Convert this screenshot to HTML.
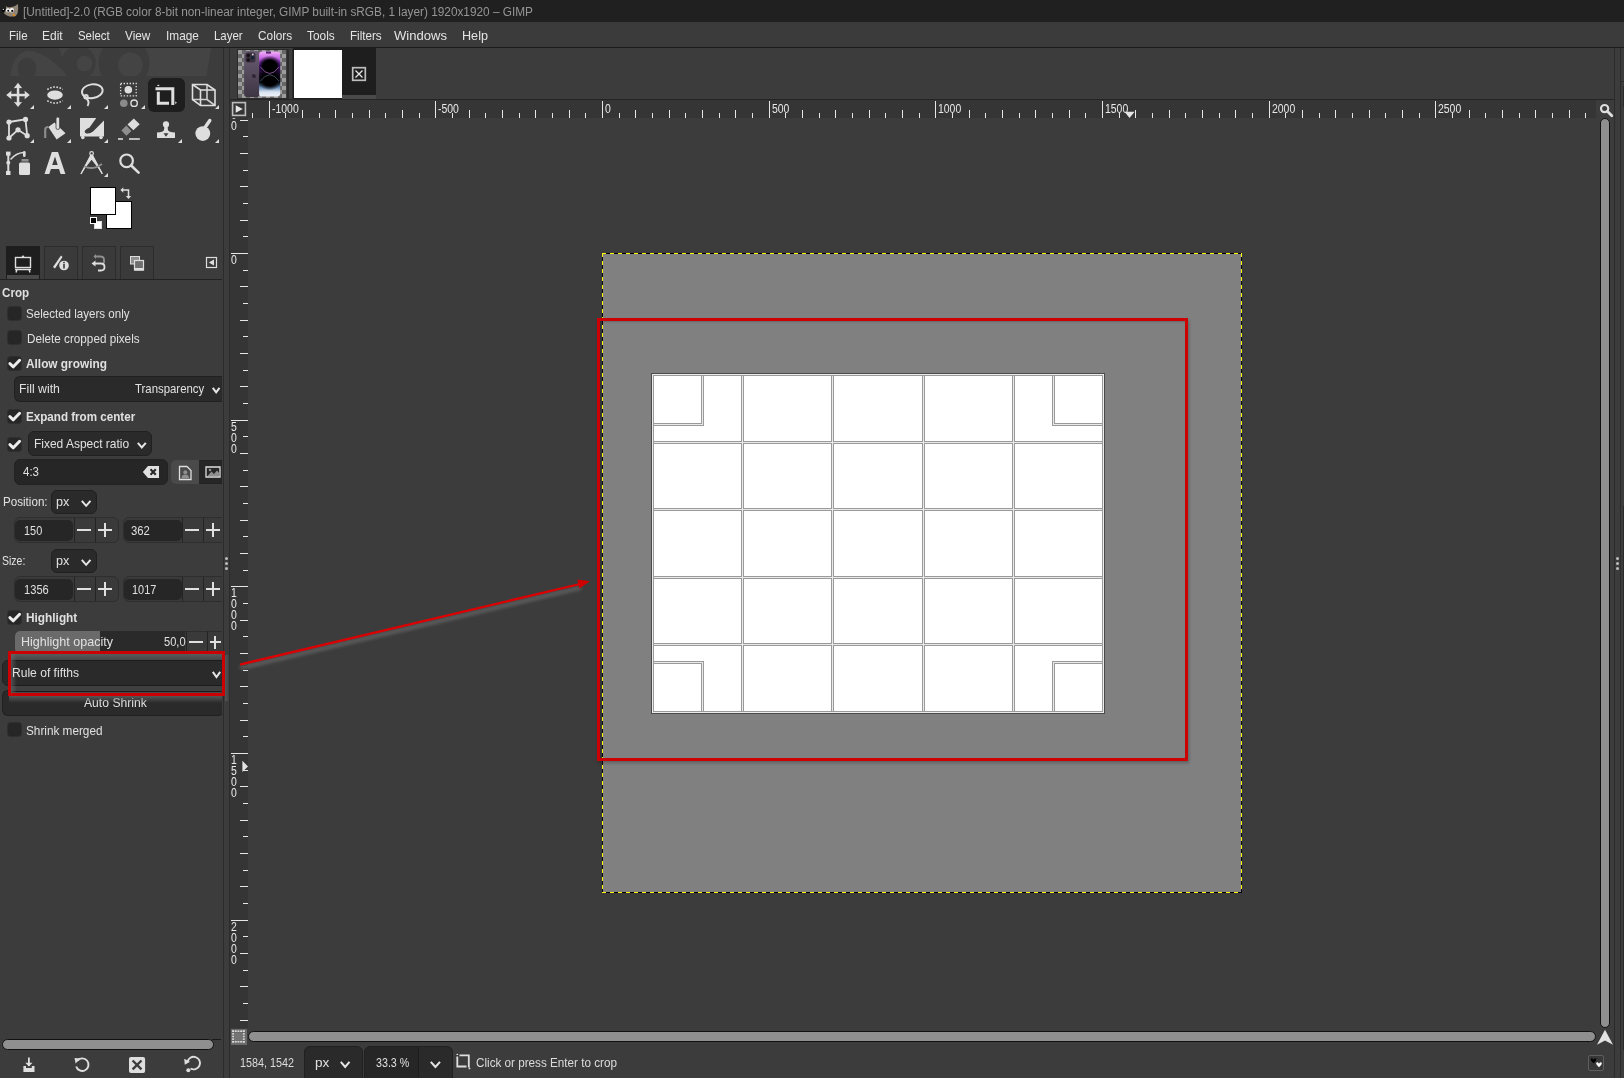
<!DOCTYPE html>
<html><head><meta charset="utf-8"><title>GIMP</title>
<style>
html,body{margin:0;padding:0;}
body{width:1624px;height:1078px;overflow:hidden;position:relative;background:#3c3c3c;font-family:"Liberation Sans", sans-serif;}
.r{position:absolute;}
.t{position:absolute;white-space:pre;transform-origin:0 50%;}
svg.r{overflow:visible;}
</style></head><body>
<div class="r" style="left:0px;top:0px;width:1624px;height:22px;background:#202020;"></div>
<svg class="r" style="left:0px;top:0px;" width="22" height="22" viewBox="0 0 22 22">
<path d="M4 13.2 Q4.2 11 5.8 10.2 L6.2 6 Q7.6 7.6 9.6 7.3 Q13 7 15 6 L18 4 Q18.6 9 17.6 13 Q16.6 16.8 12 16.6 Q7 16.6 4 13.2 Z" fill="#8f8577"/>
<ellipse cx="8" cy="10.3" rx="2.1" ry="2.1" fill="#fff"/><ellipse cx="11.9" cy="10.3" rx="2.1" ry="2.3" fill="#fff"/>
<circle cx="8.2" cy="10.7" r="1" fill="#000"/><circle cx="12.3" cy="10.9" r="1.15" fill="#000"/>
<circle cx="3.4" cy="10.2" r="1.6" fill="#000"/><circle cx="3.3" cy="9.4" r="0.65" fill="#fff"/>
<path d="M12.8 14.1 L15 15.8" stroke="#e08a20" stroke-width="1.7"/>
</svg>
<span id="t1" class="t" style="left:23.0px;top:5.62px;font-size:12.5px;line-height:12.5px;color:#959595;font-weight:normal;transform:scaleX(0.9451);">[Untitled]-2.0 (RGB color 8-bit non-linear integer, GIMP built-in sRGB, 1 layer) 1920x1920 – GIMP</span>
<div class="r" style="left:0px;top:22px;width:1624px;height:25px;background:#3b3b3b;"></div>
<div class="r" style="left:0px;top:47px;width:1624px;height:1px;background:#1c1c1c;"></div>
<span id="t2" class="t" style="left:8.6px;top:28.90px;font-size:13px;line-height:13px;color:#e4e4e4;font-weight:normal;transform:scaleX(0.8871);">File</span>
<span id="t3" class="t" style="left:42.4px;top:28.90px;font-size:13px;line-height:13px;color:#e4e4e4;font-weight:normal;transform:scaleX(0.9203);">Edit</span>
<span id="t4" class="t" style="left:78.3px;top:28.90px;font-size:13px;line-height:13px;color:#e4e4e4;font-weight:normal;transform:scaleX(0.8765);">Select</span>
<span id="t5" class="t" style="left:125px;top:28.90px;font-size:13px;line-height:13px;color:#e4e4e4;font-weight:normal;transform:scaleX(0.9053);">View</span>
<span id="t6" class="t" style="left:166.3px;top:28.90px;font-size:13px;line-height:13px;color:#e4e4e4;font-weight:normal;transform:scaleX(0.9106);">Image</span>
<span id="t7" class="t" style="left:214.3px;top:28.90px;font-size:13px;line-height:13px;color:#e4e4e4;font-weight:normal;transform:scaleX(0.8817);">Layer</span>
<span id="t8" class="t" style="left:257.9px;top:28.90px;font-size:13px;line-height:13px;color:#e4e4e4;font-weight:normal;transform:scaleX(0.9104);">Colors</span>
<span id="t9" class="t" style="left:307.4px;top:28.90px;font-size:13px;line-height:13px;color:#e4e4e4;font-weight:normal;transform:scaleX(0.9128);">Tools</span>
<span id="t10" class="t" style="left:350.2px;top:28.90px;font-size:13px;line-height:13px;color:#e4e4e4;font-weight:normal;transform:scaleX(0.8956);">Filters</span>
<span id="t11" class="t" style="left:394px;top:28.90px;font-size:13px;line-height:13px;color:#e4e4e4;font-weight:normal;transform:scaleX(1.0048);">Windows</span>
<span id="t12" class="t" style="left:462px;top:28.90px;font-size:13px;line-height:13px;color:#e4e4e4;font-weight:normal;transform:scaleX(0.9709);">Help</span>
<svg class="r" style="left:0px;top:48px;overflow:hidden" width="224" height="28" viewBox="0 0 224 28">
<g transform="translate(0,-48)">
<path d="M11 76 C11 58 22 50 30 51 C40 52 50 58 60 68 L69 76 Z" fill="#444"/>
<ellipse cx="27" cy="68.5" rx="9.3" ry="10.8" fill="#3c3c3c"/>
<path d="M59 48 H211 L206.5 76 H69 Z" fill="#444"/>
<circle cx="78.6" cy="63" r="17.2" fill="#3c3c3c"/>
<circle cx="84.5" cy="63.6" r="7.9" fill="#444"/>
<circle cx="124" cy="63" r="25.5" fill="#3c3c3c"/>
<circle cx="130.4" cy="65" r="12.4" fill="#444"/>
</g></svg>
<svg class="r" style="left:0px;top:0px;position:absolute" width="224" height="240" viewBox="0 0 224 240">
<rect x="148" y="78" width="37" height="34" rx="6" fill="#1e1e1e"/>
<!-- move -->
<g fill="#dedede">
<rect x="16.8" y="86" width="2.5" height="18"/><rect x="9" y="93.8" width="18" height="2.5"/>
<path d="M18 82.8 L13.8 88.3 Q18 87.3 22.2 88.3Z M18 107 L13.8 101.7 Q18 102.7 22.2 101.7Z M6.2 95 L11.5 90.8 Q10.5 95 11.5 99.2Z M29.8 95 L24.5 90.8 Q25.5 95 24.5 99.2Z"/>
</g>
<path d="M34 105 V109 H30 Z" fill="#dedede"/>
<!-- ellipse select -->
<ellipse cx="55" cy="95.1" rx="7.8" ry="4.6" fill="#dedede"/>
<path d="M47.3 89.5 Q55 84.5 62.7 89.5" stroke="#dedede" stroke-width="1.6" fill="none" stroke-dasharray="1.6 1.6"/>
<path d="M47.3 100.6 Q55 105.6 62.7 100.6" stroke="#dedede" stroke-width="1.6" fill="none" stroke-dasharray="1.6 1.6"/>
<path d="M71 105 V109 H67 Z" fill="#dedede"/>
<!-- lasso -->
<ellipse cx="92.3" cy="91.2" rx="10.4" ry="6.9" stroke="#dedede" stroke-width="1.9" fill="none" transform="rotate(-8 92.3 91.2)"/>
<circle cx="86" cy="96.8" r="1.9" stroke="#dedede" stroke-width="1.6" fill="none"/>
<path d="M86.5 98.5 Q90 102 87.5 106" stroke="#dedede" stroke-width="1.9" fill="none"/>
<path d="M108 105 V109 H104 Z" fill="#dedede"/>
<!-- fuzzy select -->
<rect x="120.6" y="83.5" width="15.6" height="12.3" stroke="#dedede" stroke-width="1.3" fill="none" stroke-dasharray="1.4 1.6"/>
<circle cx="128.3" cy="89.8" r="3.8" fill="#dedede"/>
<circle cx="123.8" cy="103.2" r="3.8" fill="#8a8a8a"/>
<circle cx="134.1" cy="103.2" r="3.2" stroke="#dedede" stroke-width="1.4" fill="none"/>
<path d="M145 105 V109 H141 Z" fill="#dedede"/>
<!-- crop -->
<path d="M155.5 88.8 H172.8 V105" stroke="#dedede" stroke-width="3" fill="none"/>
<path d="M158.3 91.8 V103.2 H169" stroke="#dedede" stroke-width="3" fill="none"/>
<path d="M156.8 86 L158.3 84.5 L159.8 86Z" fill="#dedede"/>
<path d="M175.3 101.2 L176.8 102.7 L175.3 104.2Z" fill="#dedede"/>
<!-- 3d -->
<g stroke="#dedede" stroke-width="1.6" fill="none">
<path d="M192.5 84.5 H207 L215 90 V105.5 H200.5 L192.5 99.5 Z"/>
<path d="M192.5 84.5 L200.5 90 H215 M200.5 90 V105.5"/>
<path d="M207 84.5 V99.5 H192.5 M207 99.5 L215 105.5" opacity="0.9"/>
</g>
<path d="M219 105 V109 H215 Z" fill="#dedede"/>
<!-- unified transform -->
<g stroke="#dedede" stroke-width="1.8" fill="none">
<path d="M9 122 L25.5 119.4 L27.2 135.7 L18 129.8 L9 138 Z"/>
</g>
<g fill="#dedede">
<circle cx="9" cy="122" r="2.6"/><circle cx="25.5" cy="119.4" r="2.6"/><circle cx="27.2" cy="135.7" r="2.6"/>
<circle cx="18" cy="129.8" r="2.6"/><circle cx="9" cy="138" r="2.6"/>
</g>
<path d="M34 139 V143 H30 Z" fill="#dedede"/>
<!-- bucket -->
<path d="M48.3 127 L54.5 122.6 L65.5 133.2 L56.6 139.6 Z" fill="#dedede"/>
<rect x="56" y="117" width="3.6" height="12.5" rx="1.8" fill="#dedede" stroke="#3c3c3c" stroke-width="0.8"/>
<path d="M45.2 138 V129.5 Q45.2 127 48.3 127" stroke="#8a8a8a" stroke-width="2.2" fill="none"/>
<path d="M71 139 V143 H67 Z" fill="#dedede"/>
<!-- paintbrush canvas -->
<rect x="80" y="118" width="24" height="18.5" fill="#dedede"/>
<circle cx="82.8" cy="137.5" r="1.8" fill="#dedede"/><circle cx="101" cy="137.5" r="1.8" fill="#dedede"/>
<path d="M97 117 L104 117 L104 120.5 L93 131.5 Q90 134 86.5 133.5 Q84 132.5 85 130.5 Q87 128.5 89.5 127.5 Z" fill="#3c3c3c"/>
<path d="M108 139 V143 H104 Z" fill="#dedede"/>
<!-- eraser -->
<path d="M127.5 124.5 L133.8 118.4 L139.7 124.2 L133.4 130.2 Z" fill="#dedede"/>
<path d="M121.4 130.4 L126.4 125.6 L131.4 131 L126.4 135.8 Z" fill="#8f8f8f"/>
<rect x="118" y="138.2" width="5" height="1.6" fill="#dedede"/><rect x="129" y="138.2" width="10.8" height="1.6" fill="#dedede"/>
<!-- clone -->
<circle cx="166" cy="124.4" r="3.1" fill="#dedede"/>
<path d="M164.6 126 H167.4 L168 130 Q168.5 132 175 132.5 V138 H157 V132.5 Q163.5 132 164 130 Z" fill="#dedede"/>
<path d="M163.5 133.2 H168.5 L166 136.8 Z" fill="#3c3c3c"/>
<path d="M182 139 V143 H178 Z" fill="#dedede"/>
<!-- smudge -->
<circle cx="202.8" cy="133.6" r="7.4" fill="#dedede"/>
<path d="M205 127.5 L209.8 120.5" stroke="#dedede" stroke-width="3.4" stroke-linecap="round"/>
<path d="M219 139 V143 H215 Z" fill="#dedede"/>
<!-- paths -->
<rect x="6" y="151.6" width="4.5" height="4" fill="#dedede"/><rect x="6" y="171" width="4.5" height="4" fill="#dedede"/>
<rect x="7.3" y="154" width="2" height="18" fill="#dedede"/><circle cx="8.3" cy="162.8" r="2" fill="#dedede"/>
<path d="M10.5 159.5 Q16 153 23.5 152.5" stroke="#dedede" stroke-width="1.3" fill="none"/>
<rect x="23" y="151" width="2.6" height="6" rx="1.3" fill="#dedede"/>
<rect x="21.5" y="159" width="7" height="2.6" fill="#8f8f8f"/>
<rect x="19" y="162.5" width="11" height="12.5" rx="1.5" fill="#dedede"/>
<!-- text A -->
<path d="M44.5 174 L51.8 152 H58 L65.4 174 H60.6 L59 169 H50.9 L49.3 174 Z M52.2 165 H57.7 L55 156.4 Z" fill="#dedede"/>
<!-- measure -->
<circle cx="91.6" cy="153.4" r="1.8" stroke="#dedede" stroke-width="1.2" fill="none"/>
<path d="M90.3 154.8 L80.2 174.6 L91.6 159.8 L103 174.3 L92.9 154.8 Z" fill="#dedede"/><path d="M91.6 155 L81 174 M91.6 155 L102.3 173.8" stroke="#dedede" stroke-width="1.4"/>
<path d="M84 166 Q92 171 102 164" stroke="#8f8f8f" stroke-width="2" fill="none"/>
<path d="M108 173 V177 H104 Z" fill="#dedede"/>
<!-- zoom -->
<circle cx="126.6" cy="160.8" r="6.3" stroke="#dedede" stroke-width="2.2" fill="none"/>
<path d="M131.2 165.5 L138.6 172.6" stroke="#dedede" stroke-width="2.6" stroke-linecap="round"/>
<!-- colors -->
<rect x="106.5" y="201.5" width="25" height="27" fill="#fff" stroke="#000" stroke-width="1"/>
<rect x="90.5" y="187.5" width="25" height="27" fill="#fff" stroke="#000" stroke-width="1"/>
<rect x="94.5" y="221.5" width="7" height="7" fill="#fff" stroke="#ddd" stroke-width="1"/>
<rect x="90.5" y="217.5" width="6" height="6" fill="#000" stroke="#fff" stroke-width="1"/>
<path d="M122 190 H128.5 V196" stroke="#dedede" stroke-width="1.5" fill="none"/>
<path d="M120.4 190 L123.3 187.3 V192.7Z M128.5 199 L125.8 196 H131.2Z" fill="#dedede"/>
</svg>
<div class="r" style="left:0px;top:279px;width:223px;height:1px;background:#222;"></div>
<div class="r" style="left:6px;top:246px;width:34px;height:33px;background:#1e1e1e;"></div>
<div class="r" style="left:7px;top:275px;width:32px;height:4px;background:#4a4a4a;"></div>
<div class="r" style="left:44px;top:246px;width:34px;height:33px;box-sizing:border-box;border:1px solid #2c2c2c;border-bottom:none;background:#3a3a3a"></div>
<div class="r" style="left:82px;top:246px;width:34px;height:33px;box-sizing:border-box;border:1px solid #2c2c2c;border-bottom:none;background:#3a3a3a"></div>
<div class="r" style="left:120px;top:246px;width:34px;height:33px;box-sizing:border-box;border:1px solid #2c2c2c;border-bottom:none;background:#3a3a3a"></div>
<svg class="r" style="left:0px;top:0px;position:absolute" width="224" height="280" viewBox="0 0 224 280">
<g stroke="#dedede" stroke-width="1.4" fill="none">
<rect x="15.5" y="257.5" width="15" height="10"/>
<path d="M15 269.5 H31 M17 269.5 L16 272.5 M29 269.5 L30 272.5"/>
</g>
<path d="M21.5 257 L23 255 L24.5 257Z" fill="#dedede"/>
<path d="M53 267 L61 255.5 L62.5 257 L55 268.5 Z" fill="#dedede"/>
<circle cx="64" cy="265.5" r="4.8" fill="#dedede"/>
<rect x="63.2" y="264" width="1.6" height="4.5" fill="#3a3a3a"/><rect x="63.2" y="261.8" width="1.6" height="1.5" fill="#3a3a3a"/>
<path d="M104 263 V259.8 Q104 256.5 100 256.5 H96" stroke="#8f8f8f" stroke-width="1.8" fill="none"/>
<path d="M96 254 L93.5 256.5 L96 259Z" fill="#8f8f8f"/>
<path d="M98 270.5 H101 Q104.5 270.5 104.5 267 Q104.5 263.5 101 263.5 H95" stroke="#dedede" stroke-width="1.8" fill="none"/>
<path d="M95.5 260.5 L91.5 263.5 L95.5 266.5Z" fill="#dedede"/>
<rect x="130.5" y="256.5" width="9" height="7.5" fill="#8f8f8f" stroke="#dedede" stroke-width="1"/>
<rect x="134.5" y="260.5" width="9" height="9.5" fill="#6f6f6f" stroke="#dedede" stroke-width="1.2"/>
<rect x="134.5" y="268" width="9" height="2.5" fill="#dedede"/>
<rect x="206.5" y="257.5" width="10" height="10" stroke="#dedede" stroke-width="1.2" fill="none"/>
<path d="M214 259.5 L208.8 262.5 L214 265.5Z" fill="#dedede"/>
</svg>
<span id="t13" class="t" style="left:2.1px;top:285.90px;font-size:13px;line-height:13px;color:#e0e0e0;font-weight:bold;transform:scaleX(0.8929);">Crop</span>
<div class="r" style="left:6.5px;top:305.5px;width:15px;height:15px;box-sizing:border-box;background:#262626;border:1px solid #2f2f2f;border-radius:3.5px"></div>
<span id="t14" class="t" style="left:26.3px;top:306.90px;font-size:13px;line-height:13px;color:#e0e0e0;font-weight:normal;transform:scaleX(0.8895);">Selected layers only</span>
<div class="r" style="left:6.5px;top:330.3px;width:15px;height:15px;box-sizing:border-box;background:#262626;border:1px solid #2f2f2f;border-radius:3.5px"></div>
<span id="t15" class="t" style="left:26.6px;top:331.70px;font-size:13px;line-height:13px;color:#e0e0e0;font-weight:normal;transform:scaleX(0.9006);">Delete cropped pixels</span>
<div class="r" style="left:6.5px;top:355.5px;width:15px;height:15px;box-sizing:border-box;background:#262626;border:1px solid #2f2f2f;border-radius:3.5px"></div><svg class="r" style="left:6.5px;top:355.5px;" width="15" height="15" viewBox="0 0 15 15"><path d="M2.9 7.6 L6.3 10.8 L12.6 4.3" stroke="#ececec" stroke-width="3" fill="none" stroke-linejoin="round" stroke-linecap="round"/></svg>
<span id="t16" class="t" style="left:26.2px;top:356.90px;font-size:13px;line-height:13px;color:#e0e0e0;font-weight:bold;transform:scaleX(0.9109);">Allow growing</span>
<div class="r" style="left:14.2px;top:376.2px;width:220px;height:25.5px;box-sizing:border-box;background:#2a2a2a;border:1px solid #202020;border-radius:6px;border-right:none;border-radius:6px 0 0 6px"></div>
<span id="t17" class="t" style="left:19.3px;top:382.00px;font-size:13px;line-height:13px;color:#e0e0e0;font-weight:normal;transform:scaleX(0.9446);">Fill with</span>
<span id="t18" class="t" style="left:134.5px;top:382.00px;font-size:13px;line-height:13px;color:#e0e0e0;font-weight:normal;transform:scaleX(0.8756);">Transparency</span>
<svg class="r" style="left:211.4px;top:386.2px;" width="10.3" height="7.6" viewBox="0 0 10.3 7.6"><path d="M1.8 1.8 L5.15 6.3999999999999995 L8.5 1.8" stroke="#e6e6e6" stroke-width="2.0" fill="none"/></svg>
<div class="r" style="left:6.5px;top:409.2px;width:15px;height:15px;box-sizing:border-box;background:#262626;border:1px solid #2f2f2f;border-radius:3.5px"></div><svg class="r" style="left:6.5px;top:409.2px;" width="15" height="15" viewBox="0 0 15 15"><path d="M2.9 7.6 L6.3 10.8 L12.6 4.3" stroke="#ececec" stroke-width="3" fill="none" stroke-linejoin="round" stroke-linecap="round"/></svg>
<span id="t19" class="t" style="left:26.2px;top:410.00px;font-size:13px;line-height:13px;color:#e0e0e0;font-weight:bold;transform:scaleX(0.8943);">Expand from center</span>
<div class="r" style="left:6.5px;top:436.5px;width:15px;height:15px;box-sizing:border-box;background:#262626;border:1px solid #2f2f2f;border-radius:3.5px"></div><svg class="r" style="left:6.5px;top:436.5px;" width="15" height="15" viewBox="0 0 15 15"><path d="M2.9 7.6 L6.3 10.8 L12.6 4.3" stroke="#ececec" stroke-width="3" fill="none" stroke-linejoin="round" stroke-linecap="round"/></svg>
<div class="r" style="left:28.3px;top:431.4px;width:124.1px;height:25.1px;box-sizing:border-box;background:#2a2a2a;border:1px solid #202020;border-radius:6px;"></div>
<span id="t20" class="t" style="left:33.8px;top:437.00px;font-size:13px;line-height:13px;color:#e0e0e0;font-weight:normal;transform:scaleX(0.9206);">Fixed Aspect ratio</span>
<svg class="r" style="left:136.2px;top:441px;" width="11.6" height="7.6" viewBox="0 0 11.6 7.6"><path d="M1.8 1.8 L5.8 6.3999999999999995 L9.799999999999999 1.8" stroke="#e6e6e6" stroke-width="2.0" fill="none"/></svg>
<div class="r" style="left:14.2px;top:459.1px;width:153.4px;height:25.6px;box-sizing:border-box;background:#262626;border:1px solid #222;border-radius:6px"></div>
<span id="t21" class="t" style="left:22.8px;top:465.00px;font-size:13px;line-height:13px;color:#e0e0e0;font-weight:normal;transform:scaleX(0.8842);">4:3</span>
<svg class="r" style="left:141px;top:465px;" width="20" height="14" viewBox="0 0 20 14"><path d="M1.8 7 L7 1 H18 V13 H7 Z" fill="#e0e0e0"/><path d="M9.5 4.2 L14.8 9.8 M14.8 4.2 L9.5 9.8" stroke="#262626" stroke-width="2"/></svg>
<div class="r" style="left:170.8px;top:459.8px;width:60px;height:24.4px;box-sizing:border-box;background:#262626;border:1px solid #222;border-radius:6px 0 0 6px"></div>
<div class="r" style="left:171.3px;top:460.3px;width:27.3px;height:23.4px;background:#4a4a4a;border-radius:5px 0 0 5px"></div>
<svg class="r" style="left:178px;top:465px;" width="15" height="16" viewBox="0 0 15 16"><path d="M1.5 1.5 H9 L13 5.5 V14.5 H1.5 Z" stroke="#dedede" stroke-width="1.3" fill="none"/><circle cx="7.3" cy="7.3" r="2" fill="#8f8f8f"/><path d="M3.5 13.5 Q3.5 9.5 7.3 9.5 Q11 9.5 11 13.5Z" fill="#8f8f8f"/></svg>
<svg class="r" style="left:205px;top:466px;" width="18" height="13" viewBox="0 0 18 13"><path d="M1 1 H15 V11 H1 Z" stroke="#dedede" stroke-width="1.3" fill="none"/><path d="M2.5 10 L6.5 5.5 L9 8 L12 4.5 L15 8 V10Z" fill="#8f8f8f"/><circle cx="5" cy="4" r="1.3" fill="#8f8f8f"/></svg>
<span id="t22" class="t" style="left:2.5px;top:495.00px;font-size:13px;line-height:13px;color:#e0e0e0;font-weight:normal;transform:scaleX(0.8941);">Position:</span>
<div class="r" style="left:51.3px;top:489.5px;width:45.3px;height:24.8px;box-sizing:border-box;background:#2a2a2a;border:1px solid #202020;border-radius:6px;"></div>
<span id="t23" class="t" style="left:55.9px;top:495.00px;font-size:13px;line-height:13px;color:#e0e0e0;font-weight:normal;transform:scaleX(0.9737);">px</span>
<svg class="r" style="left:79.7px;top:498.8px;" width="12.3" height="8" viewBox="0 0 12.3 8"><path d="M1.8 1.8 L6.15 6.8 L10.5 1.8" stroke="#e6e6e6" stroke-width="2.0" fill="none"/></svg>
<div class="r" style="left:14.2px;top:517.1px;width:105.1px;height:26.2px;box-sizing:border-box;background:#3a3a3a;border:1px solid #2e2e2e;border-radius:6px"></div><div class="r" style="left:15.2px;top:519.8000000000001px;width:58px;height:20.799999999999997px;background:#262626;border-radius:5px"></div><div class="r" style="left:73.8px;top:518.1px;width:1px;height:24.2px;background:#242424;"></div><div class="r" style="left:94.5px;top:518.1px;width:1px;height:24.2px;background:#242424;"></div><span id="t24" class="t" style="left:23.7px;top:523.70px;font-size:13px;line-height:13px;color:#e0e0e0;font-weight:normal;transform:scaleX(0.8405);">150</span><div class="r" style="left:77px;top:529.2px;width:14px;height:2px;background:#e0e0e0;"></div><div class="r" style="left:98px;top:529.2px;width:13.700000000000003px;height:2px;background:#e0e0e0;"></div><div class="r" style="left:103.85px;top:523.35px;width:2px;height:13.700000000000003px;background:#e0e0e0;"></div>
<div class="r" style="left:122.8px;top:517.1px;width:110px;height:26.2px;box-sizing:border-box;background:#3a3a3a;border:1px solid #2e2e2e;border-radius:6px"></div><div class="r" style="left:123.8px;top:519.8000000000001px;width:58px;height:20.799999999999997px;background:#262626;border-radius:5px"></div><div class="r" style="left:181.8px;top:518.1px;width:1px;height:24.2px;background:#242424;"></div><div class="r" style="left:202.5px;top:518.1px;width:1px;height:24.2px;background:#242424;"></div><span id="t25" class="t" style="left:131px;top:523.70px;font-size:13px;line-height:13px;color:#e0e0e0;font-weight:normal;transform:scaleX(0.8694);">362</span><div class="r" style="left:184.8px;top:529.2px;width:14.099999999999994px;height:2px;background:#e0e0e0;"></div><div class="r" style="left:205.8px;top:529.2px;width:14.199999999999989px;height:2px;background:#e0e0e0;"></div><div class="r" style="left:211.9px;top:523.1px;width:2px;height:14.199999999999989px;background:#e0e0e0;"></div>
<span id="t26" class="t" style="left:2.1px;top:554.10px;font-size:13px;line-height:13px;color:#e0e0e0;font-weight:normal;transform:scaleX(0.8063);">Size:</span>
<div class="r" style="left:51.3px;top:548.5px;width:45.3px;height:24.8px;box-sizing:border-box;background:#2a2a2a;border:1px solid #202020;border-radius:6px;"></div>
<span id="t27" class="t" style="left:55.9px;top:554.10px;font-size:13px;line-height:13px;color:#e0e0e0;font-weight:normal;transform:scaleX(0.9737);">px</span>
<svg class="r" style="left:79.7px;top:557.8px;" width="12.3" height="8" viewBox="0 0 12.3 8"><path d="M1.8 1.8 L6.15 6.8 L10.5 1.8" stroke="#e6e6e6" stroke-width="2.0" fill="none"/></svg>
<div class="r" style="left:14.2px;top:576.1px;width:105.1px;height:26.2px;box-sizing:border-box;background:#3a3a3a;border:1px solid #2e2e2e;border-radius:6px"></div><div class="r" style="left:15.2px;top:578.8000000000001px;width:58px;height:20.799999999999997px;background:#262626;border-radius:5px"></div><div class="r" style="left:73.8px;top:577.1px;width:1px;height:24.2px;background:#242424;"></div><div class="r" style="left:94.5px;top:577.1px;width:1px;height:24.2px;background:#242424;"></div><span id="t28" class="t" style="left:23.7px;top:582.80px;font-size:13px;line-height:13px;color:#e0e0e0;font-weight:normal;transform:scaleX(0.8560);">1356</span><div class="r" style="left:77px;top:588.2px;width:14px;height:2px;background:#e0e0e0;"></div><div class="r" style="left:98px;top:588.2px;width:13.700000000000003px;height:2px;background:#e0e0e0;"></div><div class="r" style="left:103.85px;top:582.35px;width:2px;height:13.700000000000003px;background:#e0e0e0;"></div>
<div class="r" style="left:122.8px;top:576.1px;width:110px;height:26.2px;box-sizing:border-box;background:#3a3a3a;border:1px solid #2e2e2e;border-radius:6px"></div><div class="r" style="left:123.8px;top:578.8000000000001px;width:58px;height:20.799999999999997px;background:#262626;border-radius:5px"></div><div class="r" style="left:181.8px;top:577.1px;width:1px;height:24.2px;background:#242424;"></div><div class="r" style="left:202.5px;top:577.1px;width:1px;height:24.2px;background:#242424;"></div><span id="t29" class="t" style="left:131.7px;top:582.80px;font-size:13px;line-height:13px;color:#e0e0e0;font-weight:normal;transform:scaleX(0.8416);">1017</span><div class="r" style="left:184.8px;top:588.2px;width:14.099999999999994px;height:2px;background:#e0e0e0;"></div><div class="r" style="left:205.8px;top:588.2px;width:14.199999999999989px;height:2px;background:#e0e0e0;"></div><div class="r" style="left:211.9px;top:582.1px;width:2px;height:14.199999999999989px;background:#e0e0e0;"></div>
<div class="r" style="left:6.5px;top:609.9px;width:15px;height:15px;box-sizing:border-box;background:#262626;border:1px solid #2f2f2f;border-radius:3.5px"></div><svg class="r" style="left:6.5px;top:609.9px;" width="15" height="15" viewBox="0 0 15 15"><path d="M2.9 7.6 L6.3 10.8 L12.6 4.3" stroke="#ececec" stroke-width="3" fill="none" stroke-linejoin="round" stroke-linecap="round"/></svg>
<span id="t30" class="t" style="left:26.2px;top:610.90px;font-size:13px;line-height:13px;color:#e0e0e0;font-weight:bold;transform:scaleX(0.9109);">Highlight</span>
<div class="r" style="left:14.9px;top:630.6px;width:220px;height:24px;box-sizing:border-box;background:#3a3a3a;border:1px solid #2e2e2e;border-radius:6px"></div>
<div class="r" style="left:15.4px;top:631.1px;width:170px;height:23px;background:#2a2a2a;border-radius:5px 0 0 5px"></div>
<div class="r" style="left:15.4px;top:631.1px;width:84.6px;height:23px;background:#6a6a6a;border-radius:5px 0 0 5px"></div>
<div class="r" style="left:185.5px;top:631px;width:1px;height:22px;background:#242424;"></div>
<div class="r" style="left:206.5px;top:631px;width:1px;height:22px;background:#242424;"></div>
<span id="t31" class="t" style="left:20.7px;top:634.80px;font-size:13px;line-height:13px;color:#e0e0e0;font-weight:normal;transform:scaleX(0.9641);">Highlight opacity</span>
<span id="t32" class="t" style="left:164.4px;top:634.80px;font-size:13px;line-height:13px;color:#e0e0e0;font-weight:normal;transform:scaleX(0.8514);">50,0</span>
<div class="r" style="left:189px;top:641.3px;width:13.8px;height:2px;background:#e0e0e0;"></div>
<div class="r" style="left:209.7px;top:641.3px;width:11px;height:2px;background:#e0e0e0;"></div>
<div class="r" style="left:214.2px;top:636.1px;width:2px;height:12.9px;background:#e0e0e0;"></div>
<div class="r" style="left:2.3px;top:660.4px;width:222px;height:25.2px;box-sizing:border-box;background:#2a2a2a;border:1px solid #202020;border-radius:6px;"></div>
<div class="r" style="left:2.1px;top:690px;width:222px;height:25.5px;box-sizing:border-box;background:#2a2a2a;border:1px solid #202020;border-radius:6px;border-right:none"></div>
<span id="t33" class="t" style="left:84.1px;top:695.80px;font-size:13px;line-height:13px;color:#e0e0e0;font-weight:normal;transform:scaleX(0.9350);">Auto Shrink</span>
<div class="r" style="left:6.5px;top:722.4px;width:15px;height:15px;box-sizing:border-box;background:#262626;border:1px solid #2f2f2f;border-radius:3.5px"></div>
<span id="t34" class="t" style="left:26.2px;top:724.10px;font-size:13px;line-height:13px;color:#e0e0e0;font-weight:normal;transform:scaleX(0.9049);">Shrink merged</span>
<div class="r" style="left:11px;top:654px;width:212px;height:6.5px;background:linear-gradient(#5a5a5a,#424242)"></div>
<div class="r" style="left:11px;top:660px;width:212px;height:1px;background:#1c1c1c;"></div>
<div class="r" style="left:11px;top:661px;width:212px;height:24px;background:#2a2a2a;"></div>
<div class="r" style="left:11px;top:685px;width:212px;height:1px;background:#1c1c1c;"></div>
<div class="r" style="left:11px;top:686px;width:212px;height:4.5px;background:#3f3f3f;"></div>
<div class="r" style="left:11px;top:690.5px;width:212px;height:1px;background:#1c1c1c;"></div>
<div class="r" style="left:11px;top:691.5px;width:212px;height:1.5px;background:#484848;"></div>
<div class="r" style="left:11px;top:654px;width:6px;height:39px;background:linear-gradient(90deg,rgba(110,110,110,.55),rgba(110,110,110,0))"></div>
<span id="t35" class="t" style="left:11.7px;top:665.90px;font-size:13px;line-height:13px;color:#e0e0e0;font-weight:normal;transform:scaleX(0.9289);">Rule of fifths</span>
<svg class="r" style="left:211.4px;top:669.7px;" width="11" height="8.2" viewBox="0 0 11 8.2"><path d="M1.8 1.8 L5.5 7.0 L9.2 1.8" stroke="#e6e6e6" stroke-width="2.0" fill="none"/></svg>
<div class="r" style="left:9px;top:696px;width:215px;height:7px;background:linear-gradient(rgba(100,100,100,.75),rgba(60,60,60,0))"></div>
<div class="r" style="left:2.1px;top:1039.4px;width:212.4px;height:10.8px;box-sizing:border-box;background:#8f8f8f;border:1.3px solid #111;border-radius:6px"></div>
<div class="r" style="left:212.4px;top:1039px;width:8.3px;height:1px;background:#1a1a1a;"></div>
<svg class="r" style="left:0px;top:0px;position:absolute" width="224" height="1078" viewBox="0 0 224 1078">
<path d="M28.9 1057.6 V1066" stroke="#dedede" stroke-width="1.8"/>
<path d="M25.3 1062.8 L28.9 1066.6 L32.5 1062.8Z" fill="#dedede"/>
<path d="M23.4 1066 H26 V1068 H31.8 V1066 H34.5 V1072.1 H23.4Z" fill="#dedede"/>
<path d="M77.5 1060.5 A6.3 6.3 0 1 1 76.2 1066.5" stroke="#dedede" stroke-width="1.9" fill="none"/>
<path d="M74.5 1058 L80.5 1058.6 L75.6 1063.5Z" fill="#dedede"/>
<rect x="129" y="1056.9" width="16.1" height="16.1" rx="2" fill="#dedede"/>
<path d="M132.6 1060.5 L141.5 1069.4 M141.5 1060.5 L132.6 1069.4" stroke="#3c3c3c" stroke-width="2.4"/>
<path d="M190.5 1068.5 A6.3 6.3 0 1 0 187.5 1062" stroke="#dedede" stroke-width="1.9" fill="none"/>
<path d="M184.2 1058.8 L190 1061.8 L184.8 1064.8Z" fill="#dedede"/>
<circle cx="188.3" cy="1070.2" r="2" fill="#dedede"/>
</svg>
<div class="r" style="left:222px;top:48px;width:8px;height:1030px;background:#3c3c3c;"></div>
<div class="r" style="left:223px;top:48px;width:1px;height:1030px;background:#2b2b2b;"></div>
<div class="r" style="left:229px;top:48px;width:1px;height:1030px;background:#2b2b2b;"></div>
<div class="r" style="left:224.5px;top:557.0px;width:3px;height:3px;background:#bdbdbd;border-radius:50%"></div>
<div class="r" style="left:224.5px;top:562.0px;width:3px;height:3px;background:#bdbdbd;border-radius:50%"></div>
<div class="r" style="left:224.5px;top:567.0px;width:3px;height:3px;background:#bdbdbd;border-radius:50%"></div>
<div class="r" style="left:230px;top:48px;width:1394px;height:51px;background:#3c3c3c;"></div>
<div class="r" style="left:230px;top:99px;width:1384px;height:1px;background:#252525;"></div>
<div class="r" style="left:236.7px;top:48.8px;width:51px;height:50px;box-sizing:border-box;border:1px solid #2a2a2a;background:#3a3a3a"></div>
<svg class="r" style="left:237.8px;top:49.7px;" width="48.3" height="48" viewBox="0 0 48.3 48"><rect x="0" y="0" width="4" height="4" fill="#9c9c9c"/><rect x="0" y="4" width="4" height="4" fill="#666"/><rect x="0" y="8" width="4" height="4" fill="#9c9c9c"/><rect x="0" y="12" width="4" height="4" fill="#666"/><rect x="0" y="16" width="4" height="4" fill="#9c9c9c"/><rect x="0" y="20" width="4" height="4" fill="#666"/><rect x="0" y="24" width="4" height="4" fill="#9c9c9c"/><rect x="0" y="28" width="4" height="4" fill="#666"/><rect x="0" y="32" width="4" height="4" fill="#9c9c9c"/><rect x="0" y="36" width="4" height="4" fill="#666"/><rect x="0" y="40" width="4" height="4" fill="#9c9c9c"/><rect x="0" y="44" width="4" height="4" fill="#666"/><rect x="4" y="0" width="4" height="4" fill="#666"/><rect x="4" y="4" width="4" height="4" fill="#9c9c9c"/><rect x="4" y="8" width="4" height="4" fill="#666"/><rect x="4" y="12" width="4" height="4" fill="#9c9c9c"/><rect x="4" y="16" width="4" height="4" fill="#666"/><rect x="4" y="20" width="4" height="4" fill="#9c9c9c"/><rect x="4" y="24" width="4" height="4" fill="#666"/><rect x="4" y="28" width="4" height="4" fill="#9c9c9c"/><rect x="4" y="32" width="4" height="4" fill="#666"/><rect x="4" y="36" width="4" height="4" fill="#9c9c9c"/><rect x="4" y="40" width="4" height="4" fill="#666"/><rect x="4" y="44" width="4" height="4" fill="#9c9c9c"/><rect x="8" y="0" width="4" height="4" fill="#9c9c9c"/><rect x="8" y="4" width="4" height="4" fill="#666"/><rect x="8" y="8" width="4" height="4" fill="#9c9c9c"/><rect x="8" y="12" width="4" height="4" fill="#666"/><rect x="8" y="16" width="4" height="4" fill="#9c9c9c"/><rect x="8" y="20" width="4" height="4" fill="#666"/><rect x="8" y="24" width="4" height="4" fill="#9c9c9c"/><rect x="8" y="28" width="4" height="4" fill="#666"/><rect x="8" y="32" width="4" height="4" fill="#9c9c9c"/><rect x="8" y="36" width="4" height="4" fill="#666"/><rect x="8" y="40" width="4" height="4" fill="#9c9c9c"/><rect x="8" y="44" width="4" height="4" fill="#666"/><rect x="12" y="0" width="4" height="4" fill="#666"/><rect x="12" y="4" width="4" height="4" fill="#9c9c9c"/><rect x="12" y="8" width="4" height="4" fill="#666"/><rect x="12" y="12" width="4" height="4" fill="#9c9c9c"/><rect x="12" y="16" width="4" height="4" fill="#666"/><rect x="12" y="20" width="4" height="4" fill="#9c9c9c"/><rect x="12" y="24" width="4" height="4" fill="#666"/><rect x="12" y="28" width="4" height="4" fill="#9c9c9c"/><rect x="12" y="32" width="4" height="4" fill="#666"/><rect x="12" y="36" width="4" height="4" fill="#9c9c9c"/><rect x="12" y="40" width="4" height="4" fill="#666"/><rect x="12" y="44" width="4" height="4" fill="#9c9c9c"/><rect x="16" y="0" width="4" height="4" fill="#9c9c9c"/><rect x="16" y="4" width="4" height="4" fill="#666"/><rect x="16" y="8" width="4" height="4" fill="#9c9c9c"/><rect x="16" y="12" width="4" height="4" fill="#666"/><rect x="16" y="16" width="4" height="4" fill="#9c9c9c"/><rect x="16" y="20" width="4" height="4" fill="#666"/><rect x="16" y="24" width="4" height="4" fill="#9c9c9c"/><rect x="16" y="28" width="4" height="4" fill="#666"/><rect x="16" y="32" width="4" height="4" fill="#9c9c9c"/><rect x="16" y="36" width="4" height="4" fill="#666"/><rect x="16" y="40" width="4" height="4" fill="#9c9c9c"/><rect x="16" y="44" width="4" height="4" fill="#666"/><rect x="20" y="0" width="4" height="4" fill="#666"/><rect x="20" y="4" width="4" height="4" fill="#9c9c9c"/><rect x="20" y="8" width="4" height="4" fill="#666"/><rect x="20" y="12" width="4" height="4" fill="#9c9c9c"/><rect x="20" y="16" width="4" height="4" fill="#666"/><rect x="20" y="20" width="4" height="4" fill="#9c9c9c"/><rect x="20" y="24" width="4" height="4" fill="#666"/><rect x="20" y="28" width="4" height="4" fill="#9c9c9c"/><rect x="20" y="32" width="4" height="4" fill="#666"/><rect x="20" y="36" width="4" height="4" fill="#9c9c9c"/><rect x="20" y="40" width="4" height="4" fill="#666"/><rect x="20" y="44" width="4" height="4" fill="#9c9c9c"/><rect x="24" y="0" width="4" height="4" fill="#9c9c9c"/><rect x="24" y="4" width="4" height="4" fill="#666"/><rect x="24" y="8" width="4" height="4" fill="#9c9c9c"/><rect x="24" y="12" width="4" height="4" fill="#666"/><rect x="24" y="16" width="4" height="4" fill="#9c9c9c"/><rect x="24" y="20" width="4" height="4" fill="#666"/><rect x="24" y="24" width="4" height="4" fill="#9c9c9c"/><rect x="24" y="28" width="4" height="4" fill="#666"/><rect x="24" y="32" width="4" height="4" fill="#9c9c9c"/><rect x="24" y="36" width="4" height="4" fill="#666"/><rect x="24" y="40" width="4" height="4" fill="#9c9c9c"/><rect x="24" y="44" width="4" height="4" fill="#666"/><rect x="28" y="0" width="4" height="4" fill="#666"/><rect x="28" y="4" width="4" height="4" fill="#9c9c9c"/><rect x="28" y="8" width="4" height="4" fill="#666"/><rect x="28" y="12" width="4" height="4" fill="#9c9c9c"/><rect x="28" y="16" width="4" height="4" fill="#666"/><rect x="28" y="20" width="4" height="4" fill="#9c9c9c"/><rect x="28" y="24" width="4" height="4" fill="#666"/><rect x="28" y="28" width="4" height="4" fill="#9c9c9c"/><rect x="28" y="32" width="4" height="4" fill="#666"/><rect x="28" y="36" width="4" height="4" fill="#9c9c9c"/><rect x="28" y="40" width="4" height="4" fill="#666"/><rect x="28" y="44" width="4" height="4" fill="#9c9c9c"/><rect x="32" y="0" width="4" height="4" fill="#9c9c9c"/><rect x="32" y="4" width="4" height="4" fill="#666"/><rect x="32" y="8" width="4" height="4" fill="#9c9c9c"/><rect x="32" y="12" width="4" height="4" fill="#666"/><rect x="32" y="16" width="4" height="4" fill="#9c9c9c"/><rect x="32" y="20" width="4" height="4" fill="#666"/><rect x="32" y="24" width="4" height="4" fill="#9c9c9c"/><rect x="32" y="28" width="4" height="4" fill="#666"/><rect x="32" y="32" width="4" height="4" fill="#9c9c9c"/><rect x="32" y="36" width="4" height="4" fill="#666"/><rect x="32" y="40" width="4" height="4" fill="#9c9c9c"/><rect x="32" y="44" width="4" height="4" fill="#666"/><rect x="36" y="0" width="4" height="4" fill="#666"/><rect x="36" y="4" width="4" height="4" fill="#9c9c9c"/><rect x="36" y="8" width="4" height="4" fill="#666"/><rect x="36" y="12" width="4" height="4" fill="#9c9c9c"/><rect x="36" y="16" width="4" height="4" fill="#666"/><rect x="36" y="20" width="4" height="4" fill="#9c9c9c"/><rect x="36" y="24" width="4" height="4" fill="#666"/><rect x="36" y="28" width="4" height="4" fill="#9c9c9c"/><rect x="36" y="32" width="4" height="4" fill="#666"/><rect x="36" y="36" width="4" height="4" fill="#9c9c9c"/><rect x="36" y="40" width="4" height="4" fill="#666"/><rect x="36" y="44" width="4" height="4" fill="#9c9c9c"/><rect x="40" y="0" width="4" height="4" fill="#9c9c9c"/><rect x="40" y="4" width="4" height="4" fill="#666"/><rect x="40" y="8" width="4" height="4" fill="#9c9c9c"/><rect x="40" y="12" width="4" height="4" fill="#666"/><rect x="40" y="16" width="4" height="4" fill="#9c9c9c"/><rect x="40" y="20" width="4" height="4" fill="#666"/><rect x="40" y="24" width="4" height="4" fill="#9c9c9c"/><rect x="40" y="28" width="4" height="4" fill="#666"/><rect x="40" y="32" width="4" height="4" fill="#9c9c9c"/><rect x="40" y="36" width="4" height="4" fill="#666"/><rect x="40" y="40" width="4" height="4" fill="#9c9c9c"/><rect x="40" y="44" width="4" height="4" fill="#666"/><rect x="44" y="0" width="4" height="4" fill="#666"/><rect x="44" y="4" width="4" height="4" fill="#9c9c9c"/><rect x="44" y="8" width="4" height="4" fill="#666"/><rect x="44" y="12" width="4" height="4" fill="#9c9c9c"/><rect x="44" y="16" width="4" height="4" fill="#666"/><rect x="44" y="20" width="4" height="4" fill="#9c9c9c"/><rect x="44" y="24" width="4" height="4" fill="#666"/><rect x="44" y="28" width="4" height="4" fill="#9c9c9c"/><rect x="44" y="32" width="4" height="4" fill="#666"/><rect x="44" y="36" width="4" height="4" fill="#9c9c9c"/><rect x="44" y="40" width="4" height="4" fill="#666"/><rect x="44" y="44" width="4" height="4" fill="#9c9c9c"/></svg>
<svg class="r" style="left:237.8px;top:49.7px;" width="48.3" height="48" viewBox="0 0 48.3 48">
<defs>
<linearGradient id="pb" x1="0" y1="0" x2="0" y2="1"><stop offset="0" stop-color="#6a5e72"/><stop offset="1" stop-color="#3d3444"/></linearGradient>
<linearGradient id="pf" x1="0" y1="0" x2="0" y2="1">
<stop offset="0" stop-color="#f4b0f8"/><stop offset="0.15" stop-color="#c868e8"/><stop offset="0.3" stop-color="#6a20b0"/>
<stop offset="0.5" stop-color="#150820"/><stop offset="0.68" stop-color="#0a1420"/><stop offset="0.8" stop-color="#6a90b8"/>
<stop offset="0.9" stop-color="#d8e2ee"/><stop offset="1" stop-color="#eef2f8"/></linearGradient>
<radialGradient id="bk"><stop offset="0" stop-color="#000"/><stop offset="0.55" stop-color="#000"/><stop offset="1" stop-color="#000" stop-opacity="0"/></radialGradient>
</defs>
<rect x="6.1" y="0.9" width="15.5" height="46" rx="3" fill="url(#pb)"/>
<rect x="7.5" y="2.5" width="10" height="10" rx="2.5" fill="#3a3040"/>
<circle cx="10.3" cy="5.5" r="1.7" fill="#111"/><circle cx="10.3" cy="10" r="1.7" fill="#111"/><circle cx="14.5" cy="7.8" r="1.7" fill="#123"/>
<circle cx="14.8" cy="4.5" r="0.9" fill="#ddd"/>
<path d="M15 24 Q13 26 15 28 Q16.5 27.5 17.5 28 Q18.5 26 17 24.5Z" fill="#2e2636"/>
<rect x="21.1" y="1.4" width="21.1" height="45.1" rx="3" fill="url(#pf)"/>
<clipPath id="sc"><rect x="21.1" y="1.4" width="21.1" height="45.1" rx="3"/></clipPath>
<g clip-path="url(#sc)">
<ellipse cx="31.7" cy="16" rx="12.5" ry="10.5" fill="url(#bk)"/>
<ellipse cx="31.7" cy="30" rx="12.5" ry="10.5" fill="url(#bk)"/>
<path d="M22.5 17 Q31.7 30 41 17" stroke="#b070c8" stroke-width="0.9" fill="none" opacity="0.8"/>
<path d="M22.5 31 Q31.7 18.5 41 31" stroke="#7088a0" stroke-width="0.8" fill="none" opacity="0.7"/>
</g>
<rect x="28" y="1.6" width="5" height="2" fill="#5a2a70"/>
</svg>
<div class="r" style="left:287.8px;top:48.8px;width:1px;height:50px;background:#2a2a2a;"></div>
<div class="r" style="left:292px;top:48.8px;width:1px;height:50px;background:#2a2a2a;"></div>
<div class="r" style="left:293px;top:48px;width:83px;height:50.5px;background:#1e1e1e;"></div>
<div class="r" style="left:342px;top:95px;width:34px;height:3.5px;background:#4a4a4a;"></div>
<div class="r" style="left:294px;top:50px;width:48.2px;height:48px;background:#ffffff;"></div>
<svg class="r" style="left:351px;top:66px;" width="16" height="16" viewBox="0 0 16 16"><rect x="1.7" y="1.7" width="12.6" height="12.6" stroke="#bdbdbd" stroke-width="1.7" fill="none"/><path d="M4.5 4.5 L11.5 11.5 M11.5 4.5 L4.5 11.5" stroke="#e8e8e8" stroke-width="1.3"/></svg>
<div class="r" style="left:230px;top:100px;width:1366px;height:18px;background:#353535;"></div>
<div class="r" style="left:230px;top:118px;width:18px;height:910px;background:#353535;"></div>
<svg class="r" style="left:0px;top:0px;position:absolute;shape-rendering:crispEdges" width="1624" height="1078" viewBox="0 0 1624 1078"><rect x="252" y="113" width="1" height="5" fill="#e6e6e6"/><rect x="269" y="101" width="1" height="17" fill="#e6e6e6"/><rect x="285" y="113" width="1" height="5" fill="#e6e6e6"/><rect x="302" y="110" width="1" height="8" fill="#e6e6e6"/><rect x="319" y="113" width="1" height="5" fill="#e6e6e6"/><rect x="335" y="110" width="1" height="8" fill="#e6e6e6"/><rect x="352" y="113" width="1" height="5" fill="#e6e6e6"/><rect x="369" y="110" width="1" height="8" fill="#e6e6e6"/><rect x="385" y="113" width="1" height="5" fill="#e6e6e6"/><rect x="402" y="110" width="1" height="8" fill="#e6e6e6"/><rect x="419" y="113" width="1" height="5" fill="#e6e6e6"/><rect x="435" y="101" width="1" height="17" fill="#e6e6e6"/><rect x="452" y="113" width="1" height="5" fill="#e6e6e6"/><rect x="469" y="110" width="1" height="8" fill="#e6e6e6"/><rect x="485" y="113" width="1" height="5" fill="#e6e6e6"/><rect x="502" y="110" width="1" height="8" fill="#e6e6e6"/><rect x="519" y="113" width="1" height="5" fill="#e6e6e6"/><rect x="535" y="110" width="1" height="8" fill="#e6e6e6"/><rect x="552" y="113" width="1" height="5" fill="#e6e6e6"/><rect x="569" y="110" width="1" height="8" fill="#e6e6e6"/><rect x="585" y="113" width="1" height="5" fill="#e6e6e6"/><rect x="602" y="101" width="1" height="17" fill="#e6e6e6"/><rect x="619" y="113" width="1" height="5" fill="#e6e6e6"/><rect x="635" y="110" width="1" height="8" fill="#e6e6e6"/><rect x="652" y="113" width="1" height="5" fill="#e6e6e6"/><rect x="669" y="110" width="1" height="8" fill="#e6e6e6"/><rect x="685" y="113" width="1" height="5" fill="#e6e6e6"/><rect x="702" y="110" width="1" height="8" fill="#e6e6e6"/><rect x="719" y="113" width="1" height="5" fill="#e6e6e6"/><rect x="735" y="110" width="1" height="8" fill="#e6e6e6"/><rect x="752" y="113" width="1" height="5" fill="#e6e6e6"/><rect x="769" y="101" width="1" height="17" fill="#e6e6e6"/><rect x="785" y="113" width="1" height="5" fill="#e6e6e6"/><rect x="802" y="110" width="1" height="8" fill="#e6e6e6"/><rect x="819" y="113" width="1" height="5" fill="#e6e6e6"/><rect x="835" y="110" width="1" height="8" fill="#e6e6e6"/><rect x="852" y="113" width="1" height="5" fill="#e6e6e6"/><rect x="869" y="110" width="1" height="8" fill="#e6e6e6"/><rect x="885" y="113" width="1" height="5" fill="#e6e6e6"/><rect x="902" y="110" width="1" height="8" fill="#e6e6e6"/><rect x="919" y="113" width="1" height="5" fill="#e6e6e6"/><rect x="935" y="101" width="1" height="17" fill="#e6e6e6"/><rect x="952" y="113" width="1" height="5" fill="#e6e6e6"/><rect x="969" y="110" width="1" height="8" fill="#e6e6e6"/><rect x="985" y="113" width="1" height="5" fill="#e6e6e6"/><rect x="1002" y="110" width="1" height="8" fill="#e6e6e6"/><rect x="1019" y="113" width="1" height="5" fill="#e6e6e6"/><rect x="1035" y="110" width="1" height="8" fill="#e6e6e6"/><rect x="1052" y="113" width="1" height="5" fill="#e6e6e6"/><rect x="1069" y="110" width="1" height="8" fill="#e6e6e6"/><rect x="1085" y="113" width="1" height="5" fill="#e6e6e6"/><rect x="1102" y="101" width="1" height="17" fill="#e6e6e6"/><rect x="1119" y="113" width="1" height="5" fill="#e6e6e6"/><rect x="1135" y="110" width="1" height="8" fill="#e6e6e6"/><rect x="1152" y="113" width="1" height="5" fill="#e6e6e6"/><rect x="1169" y="110" width="1" height="8" fill="#e6e6e6"/><rect x="1185" y="113" width="1" height="5" fill="#e6e6e6"/><rect x="1202" y="110" width="1" height="8" fill="#e6e6e6"/><rect x="1219" y="113" width="1" height="5" fill="#e6e6e6"/><rect x="1235" y="110" width="1" height="8" fill="#e6e6e6"/><rect x="1252" y="113" width="1" height="5" fill="#e6e6e6"/><rect x="1269" y="101" width="1" height="17" fill="#e6e6e6"/><rect x="1285" y="113" width="1" height="5" fill="#e6e6e6"/><rect x="1302" y="110" width="1" height="8" fill="#e6e6e6"/><rect x="1319" y="113" width="1" height="5" fill="#e6e6e6"/><rect x="1335" y="110" width="1" height="8" fill="#e6e6e6"/><rect x="1352" y="113" width="1" height="5" fill="#e6e6e6"/><rect x="1369" y="110" width="1" height="8" fill="#e6e6e6"/><rect x="1385" y="113" width="1" height="5" fill="#e6e6e6"/><rect x="1402" y="110" width="1" height="8" fill="#e6e6e6"/><rect x="1419" y="113" width="1" height="5" fill="#e6e6e6"/><rect x="1435" y="101" width="1" height="17" fill="#e6e6e6"/><rect x="1452" y="113" width="1" height="5" fill="#e6e6e6"/><rect x="1469" y="110" width="1" height="8" fill="#e6e6e6"/><rect x="1485" y="113" width="1" height="5" fill="#e6e6e6"/><rect x="1502" y="110" width="1" height="8" fill="#e6e6e6"/><rect x="1519" y="113" width="1" height="5" fill="#e6e6e6"/><rect x="1535" y="110" width="1" height="8" fill="#e6e6e6"/><rect x="1552" y="113" width="1" height="5" fill="#e6e6e6"/><rect x="1569" y="110" width="1" height="8" fill="#e6e6e6"/><rect x="1585" y="113" width="1" height="5" fill="#e6e6e6"/><rect x="240" y="120" width="8" height="1" fill="#e6e6e6"/><rect x="243" y="136" width="5" height="1" fill="#e6e6e6"/><rect x="240" y="153" width="8" height="1" fill="#e6e6e6"/><rect x="243" y="170" width="5" height="1" fill="#e6e6e6"/><rect x="240" y="186" width="8" height="1" fill="#e6e6e6"/><rect x="243" y="203" width="5" height="1" fill="#e6e6e6"/><rect x="240" y="220" width="8" height="1" fill="#e6e6e6"/><rect x="243" y="236" width="5" height="1" fill="#e6e6e6"/><rect x="231" y="253" width="17" height="1" fill="#e6e6e6"/><rect x="243" y="270" width="5" height="1" fill="#e6e6e6"/><rect x="240" y="286" width="8" height="1" fill="#e6e6e6"/><rect x="243" y="303" width="5" height="1" fill="#e6e6e6"/><rect x="240" y="320" width="8" height="1" fill="#e6e6e6"/><rect x="243" y="336" width="5" height="1" fill="#e6e6e6"/><rect x="240" y="353" width="8" height="1" fill="#e6e6e6"/><rect x="243" y="370" width="5" height="1" fill="#e6e6e6"/><rect x="240" y="386" width="8" height="1" fill="#e6e6e6"/><rect x="243" y="403" width="5" height="1" fill="#e6e6e6"/><rect x="231" y="420" width="17" height="1" fill="#e6e6e6"/><rect x="243" y="436" width="5" height="1" fill="#e6e6e6"/><rect x="240" y="453" width="8" height="1" fill="#e6e6e6"/><rect x="243" y="470" width="5" height="1" fill="#e6e6e6"/><rect x="240" y="486" width="8" height="1" fill="#e6e6e6"/><rect x="243" y="503" width="5" height="1" fill="#e6e6e6"/><rect x="240" y="520" width="8" height="1" fill="#e6e6e6"/><rect x="243" y="536" width="5" height="1" fill="#e6e6e6"/><rect x="240" y="553" width="8" height="1" fill="#e6e6e6"/><rect x="243" y="570" width="5" height="1" fill="#e6e6e6"/><rect x="231" y="586" width="17" height="1" fill="#e6e6e6"/><rect x="243" y="603" width="5" height="1" fill="#e6e6e6"/><rect x="240" y="620" width="8" height="1" fill="#e6e6e6"/><rect x="243" y="636" width="5" height="1" fill="#e6e6e6"/><rect x="240" y="653" width="8" height="1" fill="#e6e6e6"/><rect x="243" y="670" width="5" height="1" fill="#e6e6e6"/><rect x="240" y="686" width="8" height="1" fill="#e6e6e6"/><rect x="243" y="703" width="5" height="1" fill="#e6e6e6"/><rect x="240" y="720" width="8" height="1" fill="#e6e6e6"/><rect x="243" y="736" width="5" height="1" fill="#e6e6e6"/><rect x="231" y="753" width="17" height="1" fill="#e6e6e6"/><rect x="243" y="770" width="5" height="1" fill="#e6e6e6"/><rect x="240" y="786" width="8" height="1" fill="#e6e6e6"/><rect x="243" y="803" width="5" height="1" fill="#e6e6e6"/><rect x="240" y="820" width="8" height="1" fill="#e6e6e6"/><rect x="243" y="836" width="5" height="1" fill="#e6e6e6"/><rect x="240" y="853" width="8" height="1" fill="#e6e6e6"/><rect x="243" y="870" width="5" height="1" fill="#e6e6e6"/><rect x="240" y="886" width="8" height="1" fill="#e6e6e6"/><rect x="243" y="903" width="5" height="1" fill="#e6e6e6"/><rect x="231" y="920" width="17" height="1" fill="#e6e6e6"/><rect x="243" y="936" width="5" height="1" fill="#e6e6e6"/><rect x="240" y="953" width="8" height="1" fill="#e6e6e6"/><rect x="243" y="970" width="5" height="1" fill="#e6e6e6"/><rect x="240" y="986" width="8" height="1" fill="#e6e6e6"/><rect x="243" y="1003" width="5" height="1" fill="#e6e6e6"/><rect x="240" y="1020" width="8" height="1" fill="#e6e6e6"/></svg>
<span id="t36" class="t" style="left:271.6px;top:103.02px;font-size:12.5px;line-height:12.5px;color:#e8e8e8;font-weight:normal;transform:scaleX(0.835);">-1000</span>
<span id="t37" class="t" style="left:437.6px;top:103.02px;font-size:12.5px;line-height:12.5px;color:#e8e8e8;font-weight:normal;transform:scaleX(0.835);">-500</span>
<span id="t38" class="t" style="left:604.6px;top:103.02px;font-size:12.5px;line-height:12.5px;color:#e8e8e8;font-weight:normal;transform:scaleX(0.835);">0</span>
<span id="t39" class="t" style="left:771.6px;top:103.02px;font-size:12.5px;line-height:12.5px;color:#e8e8e8;font-weight:normal;transform:scaleX(0.835);">500</span>
<span id="t40" class="t" style="left:937.6px;top:103.02px;font-size:12.5px;line-height:12.5px;color:#e8e8e8;font-weight:normal;transform:scaleX(0.835);">1000</span>
<span id="t41" class="t" style="left:1104.6px;top:103.02px;font-size:12.5px;line-height:12.5px;color:#e8e8e8;font-weight:normal;transform:scaleX(0.835);">1500</span>
<span id="t42" class="t" style="left:1271.6px;top:103.02px;font-size:12.5px;line-height:12.5px;color:#e8e8e8;font-weight:normal;transform:scaleX(0.835);">2000</span>
<span id="t43" class="t" style="left:1437.6px;top:103.02px;font-size:12.5px;line-height:12.5px;color:#e8e8e8;font-weight:normal;transform:scaleX(0.835);">2500</span>
<svg class="r" style="left:231px;top:101px;" width="16" height="16" viewBox="0 0 16 16"><rect x="1.6" y="1.6" width="12.8" height="12.8" stroke="#bdbdbd" stroke-width="1.6" fill="none"/><path d="M4.7 4.3 L11.8 8 L4.7 11.7Z" fill="#e6e6e6"/></svg>
<div class="r" style="left:230px;top:118px;width:18px;height:910px;overflow:hidden"><div class="r" style="left:-230px;top:-118px;width:1624px;height:1078px">
<span id="t44" class="t" style="left:231.3px;top:108.82px;font-size:12.5px;line-height:12.5px;color:#e8e8e8;font-weight:normal;transform:scaleX(0.835);">0</span>
<span id="t45" class="t" style="left:231.3px;top:119.82px;font-size:12.5px;line-height:12.5px;color:#e8e8e8;font-weight:normal;transform:scaleX(0.835);">0</span>
<span id="t46" class="t" style="left:231.3px;top:253.82px;font-size:12.5px;line-height:12.5px;color:#e8e8e8;font-weight:normal;transform:scaleX(0.835);">0</span>
<span id="t47" class="t" style="left:231.3px;top:420.82px;font-size:12.5px;line-height:12.5px;color:#e8e8e8;font-weight:normal;transform:scaleX(0.835);">5</span>
<span id="t48" class="t" style="left:231.3px;top:431.82px;font-size:12.5px;line-height:12.5px;color:#e8e8e8;font-weight:normal;transform:scaleX(0.835);">0</span>
<span id="t49" class="t" style="left:231.3px;top:442.82px;font-size:12.5px;line-height:12.5px;color:#e8e8e8;font-weight:normal;transform:scaleX(0.835);">0</span>
<span id="t50" class="t" style="left:231.3px;top:586.82px;font-size:12.5px;line-height:12.5px;color:#e8e8e8;font-weight:normal;transform:scaleX(0.835);">1</span>
<span id="t51" class="t" style="left:231.3px;top:597.82px;font-size:12.5px;line-height:12.5px;color:#e8e8e8;font-weight:normal;transform:scaleX(0.835);">0</span>
<span id="t52" class="t" style="left:231.3px;top:608.82px;font-size:12.5px;line-height:12.5px;color:#e8e8e8;font-weight:normal;transform:scaleX(0.835);">0</span>
<span id="t53" class="t" style="left:231.3px;top:619.82px;font-size:12.5px;line-height:12.5px;color:#e8e8e8;font-weight:normal;transform:scaleX(0.835);">0</span>
<span id="t54" class="t" style="left:231.3px;top:753.82px;font-size:12.5px;line-height:12.5px;color:#e8e8e8;font-weight:normal;transform:scaleX(0.835);">1</span>
<span id="t55" class="t" style="left:231.3px;top:764.82px;font-size:12.5px;line-height:12.5px;color:#e8e8e8;font-weight:normal;transform:scaleX(0.835);">5</span>
<span id="t56" class="t" style="left:231.3px;top:775.82px;font-size:12.5px;line-height:12.5px;color:#e8e8e8;font-weight:normal;transform:scaleX(0.835);">0</span>
<span id="t57" class="t" style="left:231.3px;top:786.82px;font-size:12.5px;line-height:12.5px;color:#e8e8e8;font-weight:normal;transform:scaleX(0.835);">0</span>
<span id="t58" class="t" style="left:231.3px;top:920.82px;font-size:12.5px;line-height:12.5px;color:#e8e8e8;font-weight:normal;transform:scaleX(0.835);">2</span>
<span id="t59" class="t" style="left:231.3px;top:931.82px;font-size:12.5px;line-height:12.5px;color:#e8e8e8;font-weight:normal;transform:scaleX(0.835);">0</span>
<span id="t60" class="t" style="left:231.3px;top:942.82px;font-size:12.5px;line-height:12.5px;color:#e8e8e8;font-weight:normal;transform:scaleX(0.835);">0</span>
<span id="t61" class="t" style="left:231.3px;top:953.82px;font-size:12.5px;line-height:12.5px;color:#e8e8e8;font-weight:normal;transform:scaleX(0.835);">0</span>
</div></div>
<svg class="r" style="left:0px;top:0px;position:absolute" width="1624" height="1078" viewBox="0 0 1624 1078"><path d="M1124.5 111.8 H1134.6 L1129.5 118 Z" fill="#e4e4e4"/><path d="M242.4 760.8 L248 766.5 L242.4 772 Z" fill="#e4e4e4"/></svg>
<div class="r" style="left:248px;top:118px;width:1348px;height:910px;background:#3c3c3c;"></div>
<div class="r" style="left:602px;top:253px;width:640px;height:640px;background:#808080;"></div>
<div class="r" style="left:654px;top:376px;width:448px;height:335px;background:#ffffff;"></div>
<svg class="r" style="left:0px;top:0px;position:absolute;shape-rendering:crispEdges" width="1624" height="1078" viewBox="0 0 1624 1078"><rect x="651.5" y="373.5" width="453" height="340" stroke="#4a4a4a" stroke-width="1" fill="none"/><rect x="652.5" y="374.5" width="451" height="338" stroke="#ebebeb" stroke-width="1" fill="none"/><rect x="653.5" y="375.5" width="449" height="336" stroke="#9a9a9a" stroke-width="1" fill="none"/><path d="M742.5 376 V711 M832.5 376 V711 M923.5 376 V711 M1013.5 376 V711 M654 442.5 H1102 M654 509.5 H1102 M654 577.5 H1102 M654 644.5 H1102 M654 424.5 H702.5 V376 M1102 424.5 H1053.5 V376 M654 662.5 H702.5 V711 M1102 662.5 H1053.5 V711" stroke="#9a9a9a" stroke-width="3" fill="none" stroke-linejoin="round"/><path d="M742.5 376 V711 M832.5 376 V711 M923.5 376 V711 M1013.5 376 V711 M654 442.5 H1102 M654 509.5 H1102 M654 577.5 H1102 M654 644.5 H1102 M654 424.5 H702.5 V376 M1102 424.5 H1053.5 V376 M654 662.5 H702.5 V711 M1102 662.5 H1053.5 V711" stroke="#e9e9e9" stroke-width="1" fill="none"/><path d="M602 253.5 H1242 M602.5 253 V893 M1241.5 253 V893 M602 892.5 H1242" stroke="#000" stroke-width="1" fill="none"/><path d="M602 253.5 H1242 M1241.5 253 V893" stroke="#ffff00" stroke-width="1" fill="none" stroke-dasharray="4 4"/><path d="M602.5 253 V893 M602 892.5 H1242" stroke="#ffff00" stroke-width="1" fill="none" stroke-dasharray="4 4"/></svg>
<div class="r" style="left:248.2px;top:1031.2px;width:1347.8px;height:11.2px;box-sizing:border-box;background:#8f8f8f;border:1.7px solid #111;border-radius:6px"></div>
<div class="r" style="left:1599.6px;top:118.3px;width:10.8px;height:909.4px;box-sizing:border-box;background:#8f8f8f;border:1.7px solid #111;border-radius:6px"></div>
<svg class="r" style="left:1598px;top:102px;" width="17" height="17" viewBox="0 0 17 17"><circle cx="6.6" cy="6.6" r="3.6" stroke="#dedede" stroke-width="2.2" fill="none"/><path d="M9.3 9.3 L13.8 13.8" stroke="#dedede" stroke-width="2.8" stroke-linecap="round"/></svg>
<svg class="r" style="left:1595px;top:1028px;" width="20" height="18" viewBox="0 0 20 18"><path d="M10 1.7 L18 16.8 L10 12.5 L2 16.8 Z" fill="#e2e2e2"/></svg>
<div class="r" style="left:231px;top:1029.2px;width:16px;height:15.5px;background:#6a6a6a;"></div>
<svg class="r" style="left:0px;top:0px;position:absolute" width="1624" height="1078" viewBox="0 0 1624 1078"><rect x="232.2" y="1030.4" width="1.9" height="1.6" fill="#d8d8d8"/><rect x="232.2" y="1041" width="1.9" height="1.6" fill="#d8d8d8"/><rect x="232.2" y="1030.4" width="1.9" height="1.6" fill="#d8d8d8"/><rect x="242.8" y="1030.4" width="1.9" height="1.6" fill="#d8d8d8"/><rect x="234.85" y="1030.4" width="1.9" height="1.6" fill="#d8d8d8"/><rect x="234.85" y="1041" width="1.9" height="1.6" fill="#d8d8d8"/><rect x="232.2" y="1033.0500000000002" width="1.9" height="1.6" fill="#d8d8d8"/><rect x="242.8" y="1033.0500000000002" width="1.9" height="1.6" fill="#d8d8d8"/><rect x="237.5" y="1030.4" width="1.9" height="1.6" fill="#d8d8d8"/><rect x="237.5" y="1041" width="1.9" height="1.6" fill="#d8d8d8"/><rect x="232.2" y="1035.7" width="1.9" height="1.6" fill="#d8d8d8"/><rect x="242.8" y="1035.7" width="1.9" height="1.6" fill="#d8d8d8"/><rect x="240.14999999999998" y="1030.4" width="1.9" height="1.6" fill="#d8d8d8"/><rect x="240.14999999999998" y="1041" width="1.9" height="1.6" fill="#d8d8d8"/><rect x="232.2" y="1038.3500000000001" width="1.9" height="1.6" fill="#d8d8d8"/><rect x="242.8" y="1038.3500000000001" width="1.9" height="1.6" fill="#d8d8d8"/><rect x="242.79999999999998" y="1030.4" width="1.9" height="1.6" fill="#d8d8d8"/><rect x="242.79999999999998" y="1041" width="1.9" height="1.6" fill="#d8d8d8"/><rect x="232.2" y="1041.0" width="1.9" height="1.6" fill="#d8d8d8"/><rect x="242.8" y="1041.0" width="1.9" height="1.6" fill="#d8d8d8"/><rect x="235" y="1033" width="7" height="7.5" fill="#747474"/></svg>
<div class="r" style="left:1614px;top:48px;width:1px;height:1030px;background:#2b2b2b;"></div>
<div class="r" style="left:1620px;top:48px;width:1px;height:1030px;background:#2b2b2b;"></div>
<div class="r" style="left:1621px;top:81px;width:3px;height:1px;background:#2b2b2b;"></div>
<div class="r" style="left:1623px;top:86px;width:1px;height:21px;background:#2a2a2a;"></div>
<div class="r" style="left:1623px;top:506px;width:1px;height:544px;background:#2a2a2a;"></div>
<div class="r" style="left:1616px;top:557.0px;width:3px;height:3px;background:#bdbdbd;border-radius:50%"></div>
<div class="r" style="left:1616px;top:562.0px;width:3px;height:3px;background:#bdbdbd;border-radius:50%"></div>
<div class="r" style="left:1616px;top:567.0px;width:3px;height:3px;background:#bdbdbd;border-radius:50%"></div>
<span id="t62" class="t" style="left:240px;top:1055.90px;font-size:13px;line-height:13px;color:#dcdcdc;font-weight:normal;transform:scaleX(0.8302);">1584, 1542</span>
<div class="r" style="left:303.5px;top:1046.2px;width:59.1px;height:40px;box-sizing:border-box;background:#2a2a2a;border:1px solid #202020;border-radius:6px"></div>
<span id="t63" class="t" style="left:314.9px;top:1055.90px;font-size:13px;line-height:13px;color:#e0e0e0;font-weight:normal;transform:scaleX(1.0444);">px</span>
<svg class="r" style="left:339px;top:1060px;" width="12.3" height="8.2" viewBox="0 0 12.3 8.2"><path d="M1.8 1.8 L6.15 7.0 L10.5 1.8" stroke="#e6e6e6" stroke-width="2.0" fill="none"/></svg>
<div class="r" style="left:364.1px;top:1046.2px;width:88.7px;height:40px;box-sizing:border-box;background:#2a2a2a;border:1px solid #202020;border-radius:6px"></div>
<div class="r" style="left:365.1px;top:1047.2px;width:52.5px;height:40px;background:#262626;border-radius:5px 0 0 0"></div>
<div class="r" style="left:417.6px;top:1047px;width:1px;height:31px;background:#1e1e1e;"></div>
<span id="t64" class="t" style="left:376.2px;top:1055.90px;font-size:13px;line-height:13px;color:#e0e0e0;font-weight:normal;transform:scaleX(0.8231);">33.3 %</span>
<svg class="r" style="left:428.7px;top:1060px;" width="12.8" height="8.2" viewBox="0 0 12.8 8.2"><path d="M1.8 1.8 L6.4 7.0 L11.0 1.8" stroke="#e6e6e6" stroke-width="2.0" fill="none"/></svg>
<svg class="r" style="left:454px;top:1052px;" width="18" height="18" viewBox="0 0 18 18"><path d="M3.3 4.5 V14.5 H12.5" stroke="#dedede" stroke-width="1.8" fill="none"/><path d="M5.5 3.3 H14.8 V15.5" stroke="#dedede" stroke-width="1.8" fill="none"/><path d="M2 3 L3.3 1.5 L4.6 3Z" fill="#dedede"/><circle cx="15.5" cy="16.4" r="0.9" fill="#dedede"/></svg>
<span id="t65" class="t" style="left:476.1px;top:1055.90px;font-size:13px;line-height:13px;color:#dcdcdc;font-weight:normal;transform:scaleX(0.8993);">Click or press Enter to crop</span>
<div class="r" style="left:1588.3px;top:1055.2px;width:15.8px;height:15.8px;box-sizing:border-box;border:1px solid #5e5e5e;background:#383838;border-radius:2px"></div>
<svg class="r" style="left:1588px;top:1055px;" width="16" height="16" viewBox="0 0 16 16"><path d="M5.5 4.8 Q4.2 2.5 2.8 3.8 Q2 5 5.5 8.2 Q9 5 8.2 3.8 Q6.8 2.5 5.5 4.8Z" fill="#000"/><path d="M11 8.8 Q9.7 6.5 8.3 7.8 Q7.5 9 11 12.2 Q14.5 9 13.7 7.8 Q12.3 6.5 11 8.8Z" fill="#fff"/></svg>
<div class="r" style="left:597px;top:318px;width:591px;height:443px;box-sizing:border-box;border:3px solid #cc0000;box-shadow:1px 2px 3px rgba(0,0,0,.25), inset 1px 1px 2px rgba(0,0,0,.2)"></div>
<div class="r" style="left:225px;top:655px;width:5px;height:46px;background:linear-gradient(90deg,rgba(90,90,90,.8),rgba(60,60,60,0))"></div>
<div class="r" style="left:8px;top:651px;width:217px;height:45px;box-sizing:border-box;border:3px solid #cc0000"></div>
<svg class="r" style="left:0px;top:0px;position:absolute" width="1624" height="1078" viewBox="0 0 1624 1078">
<path d="M242 667.5 L579 588" stroke="rgba(140,140,140,0.35)" stroke-width="5" fill="none" stroke-linecap="round" style="filter:blur(1.5px)"/>
<path d="M241 664.3 L580 584" stroke="#dd0000" stroke-width="2.3" fill="none" stroke-linecap="round"/>
<path d="M590 581.3 L577.3 579.6 L579.3 588.5 Z" fill="#d00000"/>
</svg>
</body></html>
